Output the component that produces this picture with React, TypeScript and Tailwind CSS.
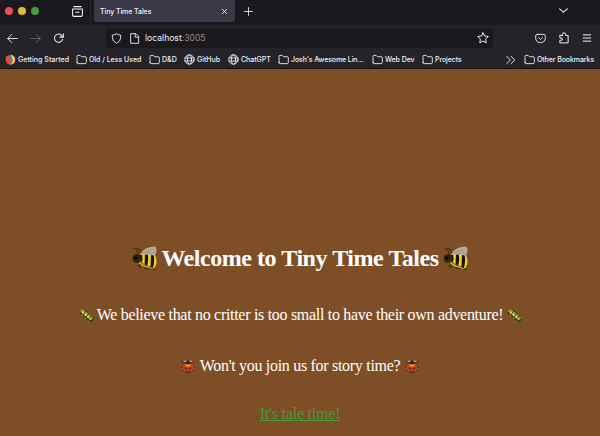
import type { ReactNode } from "react";

const line = {
  fill: "none",
  stroke: "currentColor",
  strokeLinecap: "round" as const,
  strokeLinejoin: "round" as const,
};

function Icon({ className, children, box = 16, sw = 1.5 }: { className: string; children: ReactNode; box?: number; sw?: number }) {
  return (
    <svg className={`block shrink-0 ${className}`} viewBox={`0 0 ${box} ${box}`} {...line} strokeWidth={sw}>
      {children}
    </svg>
  );
}

function Folder() {
  return (
    <Icon className="h-[11px] w-[11px]" sw={1.3}>
      <path d="M1.500 12.500V3.500Q1.500 2 3 2h3l2 2h5.500Q15 4 15 5.500v7q0 1.500-1.500 1.500H3q-1.500 0-1.500-1.500Z" />
    </Icon>
  );
}

function Globe() {
  return (
    <Icon className="h-[11px] w-[11px]" sw={1.3}>
      <circle cx="8" cy="8" r="6.800" />
      <ellipse cx="8" cy="8" rx="3" ry="6.800" />
      <path d="M1.500 5.800h13M1.500 10.200h13" />
    </Icon>
  );
}

function Firefox() {
  return (
    <svg className="block h-[11px] w-[11px] shrink-0" viewBox="0 0 16 16">
      <circle cx="8" cy="8.500" r="7" fill="#e8443a" />
      <path d="M9 1q6 2 6 8c-1 5-5 7-9 6 5-1 6-4 4-7Z" fill="#f8b83b" />
      <circle cx="8.500" cy="7" r="3.600" fill="#3489dc" />
      <path d="M1 8 2 2l3 2 3 1-2 2v3l4 1c-1 4-7 4-8 0Z" fill="#ee4a38" />
      <path d="m9 0 2 4 2 2c2 4 0 7-3 8 2-3 2-5 0-8Z" fill="#ffc744" />
    </svg>
  );
}

function Bookmark({ icon, label, slot, text }: { icon: ReactNode; label: string; slot: string; text: string }) {
  return (
    <div className={`flex shrink-0 items-center ${slot}`}>
      {icon}
      <span className={`ml-[2px] whitespace-nowrap ${text}`}>{label}</span>
    </div>
  );
}

function Bee() {
  return (
    <svg className="block h-[25px] w-[25px] shrink-0" viewBox="0 0 25 25">
      <path d="m10 18-4 2 3 2m5-3-1 3 4 1m3-3 1 3 3 1M6 9 5 4 1 2m7 7V4L4 2" fill="none" stroke="#4a2f14" strokeWidth="1.100" />
      <path d="M7 9q8-4 16 0 3 7 0 12-2 3-5 1-7-1-11-5Z" fill="#f3d529" />
      <path d="M8 9h2.200q1 4-.5 8.500L7.500 16ZM13 8h2.600q1.500 6-.7 12.500L12.500 19ZM19 8.500l2.600.5q1.500 6-.8 13l-2.300-.5Z" fill="#17130c" />
      <path d="M8 8.500Q12 1 22 .5q2.500 0 2.500 4 0 4-3 5-6-1.500-13.500-1Z" fill="#b8aa98" />
      <path d="m10 7.500 12-4.500M14 8l9-2" stroke="#9d8d78" strokeWidth=".7" />
      <ellipse cx="5" cy="12.500" rx="4.500" ry="4.500" fill="#33260f" />
      <circle cx="3.800" cy="12" r="1.800" fill="#0b0b0a" />
      <path d="m8 15 3 3 5 2 4 2" fill="none" stroke="#7c601a" strokeWidth="1.200" />
    </svg>
  );
}

function Caterpillar() {
  return (
    <svg className="block h-[16px] w-[16px] shrink-0" viewBox="0 0 16 16">
      <path d="m4 4 8.500 8" stroke="#34431a" strokeWidth="6" strokeLinecap="round" />
      <path d="m4 3.500 9 7.500" stroke="#83a83b" strokeWidth="3.500" strokeLinecap="round" />
      <path d="m4 5 9 7.500" stroke="#e0d25a" strokeWidth="2" strokeDasharray="2 1.5" />
      <path d="m7.500 4-1 2m4 .5-1 2m4 .5-1 2" stroke="#38501c" />
      <path d="M2 5q0-3 3-3" fill="none" stroke="#c9552a" strokeWidth="2" />
      <path d="m1 1 2 2" stroke="#9e3f22" />
      <path d="m4 8 1 1m2 2 1 1m2 2 1 1" stroke="#c86a30" strokeWidth="1.400" />
    </svg>
  );
}

function Beetle() {
  return (
    <svg className="block h-[14px] w-[14px] shrink-0" viewBox="0 0 14 14">
      <path d="M3 5 1 3 0 2m11 3 2-2 1-1M3 8 0 8m11 0 3 0M3 11l-2 1m10-1 2 1" fill="none" stroke="#4b2a1a" strokeWidth=".8" />
      <ellipse cx="7" cy="8.800" rx="5.300" ry="4.600" fill="#c9431f" />
      <path d="M3.500 5q0-3.500 3.500-3.500T10.500 5Z" fill="#292c30" />
      <path d="m3 2.500 2.500-.5m3 0 2.500.5" stroke="#b9c4d0" strokeWidth="1.200" />
      <path d="m4.500 5.500 2.500 2 2.500-2" stroke="#f0a42a" fill="none" strokeWidth="1.400" />
      <path d="M7 8v5" stroke="#7c2814" strokeWidth=".7" />
      <circle cx="4.700" cy="9.500" r=".9" fill="#501e12" />
      <circle cx="9.300" cy="9.500" r=".9" fill="#501e12" />
      <path d="M4 12.700q3 1.500 6 0" stroke="#3d1c12" fill="none" />
    </svg>
  );
}

export default function App() {
  return (
    <div className="h-[436px] w-[600px] overflow-hidden bg-[#7e4e27] font-['Inter',sans-serif] text-[#f1f0f3]">
      <div className="flex h-[25px] bg-[#1b191f]">
        <div className="flex w-[91px] shrink-0 items-center border-r border-[#29272f] pb-[3px] pl-[5px]">
          <i className="size-2 rounded-full bg-[#e64e49]" />
          <i className="ml-[5px] size-2 rounded-full bg-[#e5ba3b]" />
          <i className="ml-[5px] size-2 rounded-full bg-[#469b3a]" />
          <Icon className="ml-[32px] h-[13px] w-[13px]" sw={1.3}>
            <path d="M3.500 2h9M2 5h12v7.500q0 1.500-1.500 1.500h-9Q2 14 2 12.500ZM6 9h4" />
          </Icon>
        </div>
        <div className="ml-[3px] flex h-[22px] w-[141px] items-center rounded-b-[3px] bg-[#3c3947] pl-[6px]">
          <span className="w-[121px] text-[7px] font-medium leading-none tracking-[-0.08px]">Tiny Time Tales</span>
          <Icon className="size-[7px]" sw={2}><path d="m3 3 10 10M13 3 3 13" /></Icon>
        </div>
        <Icon className="ml-[9px] mt-[7px] size-[9px]"><path d="M8 1v14M1 8h14" /></Icon>
        <Icon className="ml-[306px] mt-[6px] size-[9px]" sw={1.8}><path d="m1 5 7 6 7-6" /></Icon>
      </div>
      <div className="flex h-[26px] items-center bg-[#25232a]">
        <Icon className="ml-[7px] size-[11px]" sw={1.3}><path d="M15 8H1m6-6L1 8l6 6" /></Icon>
        <Icon className="ml-[12px] size-[11px] text-[#69666e]" sw={1.3}><path d="M1 8h14M9 2l6 6-6 6" /></Icon>
        <Icon className="ml-[12px] size-[11px]"><path d="M14 9a6 6 0 1 1-1-5l2 2m0-5v5h-5" /></Icon>
        <div className="ml-[42px] flex h-[20px] w-[387px] items-center rounded-[2px] bg-[#1b191e] pl-[5px]">
          <Icon className="size-[11px]" sw={1.3}><path d="M8 1Q10 3 14 3v4q0 5-6 8Q2 12 2 7V3q4 0 6-2Z" /></Icon>
          <Icon className="ml-[7px] size-[11px]" sw={1.3}><path d="M3 1h7l4 4v10H3ZM9 1v5h5" /></Icon>
          <span className="ml-[5px] w-[332px] text-[8.600px] leading-none">localhost<span className="text-[#8c8990]">:3005</span></span>
          <Icon className="size-[12px]" sw={1.3}><path d="m8 1 2.100 4.300 4.900.7-3.500 3.500.8 4.900L8 12.100l-4.300 2.300.8-4.900L1 6l4.900-.7Z" /></Icon>
        </div>
        <Icon className="ml-[42px] size-[11px]" sw={1.3}><path d="M3 2h10q2 0 2 2v3q0 7-7 7T1 7V4q0-2 2-2Zm2 4.500 3 3 3-3" /></Icon>
        <Icon className="ml-[12px] size-[12px]" sw={1.3}><path d="M6 4.500V3q0-2 2-2t2 2v1.500h3.500v10H2.500V11H4q2 0 2-1.500T4 8H2.500V4.500Z" /></Icon>
        <Icon className="ml-[12px] size-[10px]" sw={1.6}><path d="M2 3h12M2 8h12M2 13h12" /></Icon>
      </div>
      <div className="flex h-[18px] items-center border-b border-[#141319] bg-[#25232a] pl-[5px] text-[7px] font-medium leading-none">
        <Bookmark icon={<Firefox />} label="Getting Started" slot="w-[71px]" text="tracking-[0.03px]" />
        <Bookmark icon={<Folder />} label="Old / Less Used" slot="w-[73px]" text="tracking-[-0.02px]" />
        <Bookmark icon={<Folder />} label="D&D" slot="w-[35px]" text="" />
        <Bookmark icon={<Globe />} label="GitHub" slot="w-[44px]" text="tracking-[-0.02px]" />
        <Bookmark icon={<Globe />} label="ChatGPT" slot="w-[50px]" text="tracking-[-0.05px]" />
        <Bookmark icon={<Folder />} label="Josh's Awesome Lin..." slot="w-[94px]" text="tracking-[-0.11px]" />
        <Bookmark icon={<Folder />} label="Web Dev" slot="w-[50px]" text="tracking-[-0.08px]" />
        <Bookmark icon={<Folder />} label="Projects" slot="w-[84px]" text="tracking-[-0.08px]" />
        <Icon className="mr-[8px] size-[10px]"><path d="m1 2 6 6-6 6m7-12 6 6-6 6" /></Icon>
        <Bookmark icon={<Folder />} label="Other Bookmarks" slot="w-[76px]" text="tracking-[-0.08px]" />
      </div>
      <main className="flex flex-col items-center pt-[175px] font-['Liberation_Serif',serif] text-white">
        <h1 className="flex h-[28px] items-center gap-[4px] whitespace-nowrap text-[24px] font-bold leading-[28px]">
          <Bee /><span className="tracking-[-0.45px]">Welcome to Tiny Time Tales</span><Bee />
        </h1>
        <p className="mt-[33px] flex h-[20px] items-center gap-[3px] whitespace-nowrap text-[16px] leading-[20px]">
          <Caterpillar /><span className="tracking-[-0.3px]">We believe that no critter is too small to have their own adventure!</span><Caterpillar />
        </p>
        <p className="mt-[31px] flex h-[20px] items-center gap-[5px] whitespace-nowrap text-[16px] leading-[20px]">
          <Beetle /><span className="tracking-[-0.3px]">Won't you join us for story time?</span><Beetle />
        </p>
        <a href="#" className="mt-[28px] text-[16px] leading-[20px] tracking-[-0.2px] text-[#469a39] underline">It's tale time!</a>
      </main>
    </div>
  );
}
